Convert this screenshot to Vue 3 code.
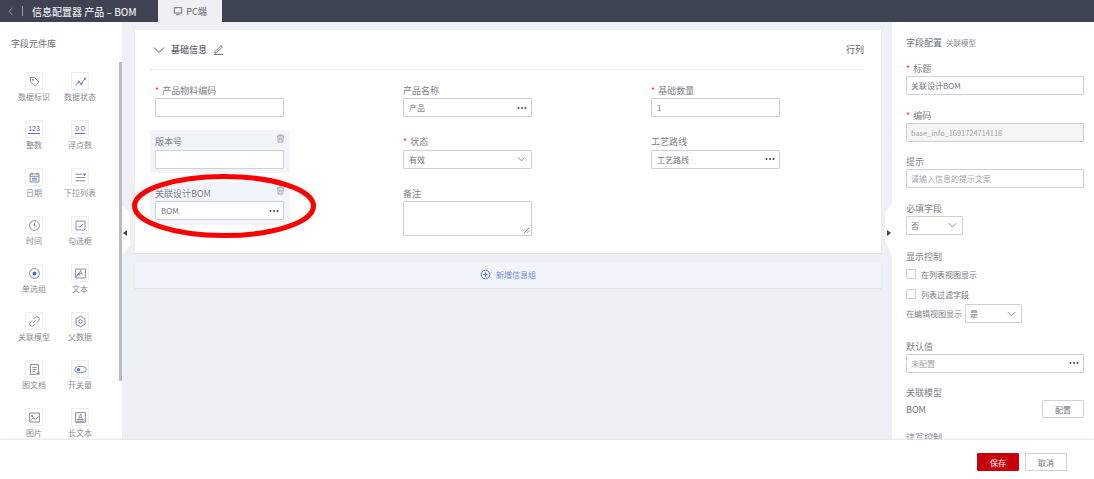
<script setup>
const tools = [
  { n: '数据标识', g: 'M3 3h5l5.5 5.5-5 5L3 8z', b: 'M5.5 5.5h1v1h-1z' },
  { n: '数据状态', g: 'M2 13l4-5 3 3 5-7', b: 'M4.8 8.5a1 1 0 1 0 2 0 1 1 0 1 0-2 0M8 11a1 1 0 1 0 2 0 1 1 0 1 0-2 0M12.5 4.5a1 1 0 1 0 2 0 1 1 0 1 0-2 0' },
  { n: '整数', t: '123' },
  { n: '浮点数', t: '0.0' },
  { n: '日期', g: 'M2.5 3.5h11v10h-11zM5 2v3M11 2v3M2.5 6.5h11', b: 'M5 9h6M5 11h6' },
  { n: '下拉列表', g: 'M2 4h8M2 8h12M2 12h12', b: 'M11 3h4l-2 3z', f: true },
  { n: '时间', g: 'M2 8a6 6 0 1 0 12 0 6 6 0 1 0-12 0M8 4.5V8l2.5 1.2' },
  { n: '勾选框', g: 'M2.5 2.5h11v11h-11z', b: 'M5 8l2.2 2.2L11 6' },
  { n: '单选组', g: 'M2 8a6 6 0 1 0 12 0 6 6 0 1 0-12 0', b: 'M5.5 8a2.5 2.5 0 1 0 5 0 2.5 2.5 0 1 0-5 0', f: true },
  { n: '文本', g: 'M2 2.5h12v11H2z', l: 'A', b: 'M3 12l2.5-4 2 2.5' },
  { n: '关联模型', g: 'M6.5 9.5l3-3M7 5l2-2a2.8 2.8 0 0 1 4 4l-2 2M9 11l-2 2a2.8 2.8 0 0 1-4-4l2-2' },
  { n: '父数据', g: 'M8 1.5l5.5 3.2v6.6L8 14.5l-5.5-3.2V4.7z', b: 'M5.8 8a2.2 2.2 0 1 0 4.4 0 2.2 2.2 0 1 0-4.4 0' },
  { n: '图文档', g: 'M3 2h10v9l-3 3H3zM5.5 5.5h5M5.5 8h5M5.5 10.5h3', b: 'M10.5 14l3.5-3.5v3.5z', f: true },
  { n: '开关量', g: 'M4.5 4.5h7a3.5 3.5 0 0 1 0 7h-7a3.5 3.5 0 0 1 0-7z', b: 'M3.5 8a2 2 0 1 0 4 0 2 2 0 1 0-4 0', f: true },
  { n: '图片', g: 'M2 2.5h12v11H2zM3 12l3.5-3.5 2.5 2 4-4', b: 'M4 5h2v2H4z', f: true },
  { n: '长文本', g: 'M2 2h12v12H2zM3.5 10.5h9M3.5 12.5h9', l: 'A' }
]
const fields = [
  { label: '产品物料编码', req: true },
  { label: '产品名称', value: '产品', kind: 'more' },
  { label: '基础数量', req: true, value: '1' },
  { label: '版本号', active: true },
  { label: '状态', req: true, value: '有效', kind: 'select' },
  { label: '工艺路线', value: '工艺路线', kind: 'more' },
  { label: '关联设计BOM', value: 'BOM', kind: 'more', active: true },
  { label: '备注', kind: 'area' }
]
</script>

<template>
  <div class="page">
    <header class="topbar">
      <svg class="back" viewBox="0 0 8 12"><path d="M6 1L1.5 6 6 11" /></svg>
      <i class="sep"></i>
      <strong class="crumb">信息配置器 产品 – BOM</strong>
      <div class="tab">
        <svg viewBox="0 0 12 12"><path d="M1.5 2h9v6.5h-9zM4 10.5h4" /></svg>
        <span>PC端</span>
      </div>
    </header>

    <div class="main">
      <aside class="lib">
        <h3>字段元件库</h3>
        <div class="tools">
          <div v-for="x in tools" :key="x.n" class="tool">
            <div class="tile">
              <span v-if="x.t" class="num">{{ x.t }}</span>
              <svg v-else viewBox="0 0 16 16">
                <path v-if="x.g" :d="x.g" class="ig" />
                <path v-if="x.b" :d="x.b" :class="x.f ? 'ibf' : 'ib'" />
                <text v-if="x.l" x="8" y="9.5" text-anchor="middle" class="il">{{ x.l }}</text>
              </svg>
            </div>
            <span class="tname">{{ x.n }}</span>
          </div>
        </div>
        <i class="scroll"></i>
      </aside>

      <section class="canvas">
        <div class="card">
          <div class="cardhead">
            <svg class="chev" viewBox="0 0 12 8"><path d="M1 1.5l5 5 5-5" /></svg>
            <span class="ctitle">基础信息</span>
            <svg class="pen" viewBox="0 0 12 12"><path d="M2 8.5L8.5 2l1.5 1.5L3.5 10H2zM1 11.5h10" /></svg>
            <span class="rc">行列</span>
          </div>
          <div class="grid">
            <div v-for="f in fields" :key="f.label" class="cell" :class="{ active: f.active }">
              <label class="flabel"><em v-if="f.req">*</em>{{ f.label }}</label>
              <div class="box" :class="{ area: f.kind === 'area' }">
                <span>{{ f.value }}</span>
                <i v-if="f.kind === 'more'" class="dots"></i>
                <svg v-if="f.kind === 'select'" class="caret" viewBox="0 0 10 6"><path d="M1 1l4 4 4-4" /></svg>
                <svg v-if="f.kind === 'area'" class="grip" viewBox="0 0 8 8"><path d="M1 7l6-6M4 7l3-3" /></svg>
              </div>
              <svg v-if="f.active" class="trash" viewBox="0 0 10 10"><path d="M1 2.2h8M3.5 2V1h3v1M2 2.5l.5 6.5h5l.5-6.5M4.2 4v3.5M5.8 4v3.5" /></svg>
            </div>
          </div>
        </div>
        <div class="addbar">
          <svg viewBox="0 0 12 12"><circle cx="6" cy="6" r="4.7" /><path d="M6 3.5v5M3.5 6h5" /></svg>
          <span>新增信息组</span>
        </div>
      </section>

      <aside class="conf">
        <div class="chead"><b>字段配置</b><small>关联模型</small></div>
        <div class="cfield"><label><em>*</em>标题</label><div class="box wide"><span>关联设计BOM</span></div></div>
        <div class="cfield"><label><em>*</em>编码</label><div class="box wide off"><span class="code">base_info_1691724714118</span></div></div>
        <div class="cfield"><label>提示</label><div class="box wide hint"><span>请输入信息的提示文案</span></div></div>
        <div class="cfield"><label>必填字段</label>
          <div class="box short"><span>否</span><svg class="caret" viewBox="0 0 10 6"><path d="M1 1l4 4 4-4" /></svg></div>
        </div>
        <div class="cfield show">
          <label>显示控制</label>
          <div class="check"><i></i><span>在列表视图显示</span></div>
          <div class="check"><i></i><span>列表过滤字段</span></div>
          <div class="inline"><span>在编辑视图显示</span>
            <div class="box short"><span>是</span><svg class="caret" viewBox="0 0 10 6"><path d="M1 1l4 4 4-4" /></svg></div>
          </div>
        </div>
        <div class="cfield"><label>默认值</label><div class="box wide hint"><span>未配置</span><i class="dots"></i></div></div>
        <div class="cfield">
          <label>关联模型</label>
          <div class="modelrow"><span>BOM</span><button type="button">配置</button></div>
        </div>
        <div class="cfield rw"><label>读写控制</label></div>
      </aside>

      <div class="handle hl"><i></i></div>
      <div class="handle hr"><i></i></div>
    </div>

    <footer class="foot">
      <button type="button" class="save">保存</button>
      <button type="button" class="cancel">取消</button>
    </footer>

    <svg class="mark" viewBox="0 0 190 70"><ellipse cx="94" cy="35" rx="89.5" ry="29.5" /></svg>
  </div>
</template>

<style>
html, body { margin: 0; background: #fff; }
</style>

<style scoped>
.page {
  position: relative;
  width: 1094px;
  height: 479px;
  overflow: hidden;
  display: flex;
  flex-direction: column;
  font-family: "Noto Sans CJK SC", "Noto Sans", sans-serif;
  color: #71757d;
  font-size: 8px;
}
svg { display: block; fill: none; }
em { font-style: normal; color: #e8453c; margin-right: 3px; }

.topbar {
  height: 22px;
  flex: none;
  background: #3e4351;
  display: flex;
  align-items: center;
  color: #e6e8ec;
}
.back { width: 6px; height: 9px; margin-left: 8px; }
.back path { stroke: #aeb2bb; stroke-width: 1; }
.sep { width: 1px; height: 10px; background: #9a9ea8; margin-left: 8px; }
.crumb { font-size: 10px; font-weight: 500; margin-left: 9px; width: 126px; white-space: nowrap; }
.tab {
  width: 64px;
  height: 22px;
  background: #eef0f5;
  display: flex;
  align-items: center;
  justify-content: center;
  gap: 3px;
  color: #5f6570;
  font-size: 9px;
}
.tab svg { width: 10px; height: 10px; }
.tab path { stroke: #4d5565; stroke-width: 1; }

.main { position: relative; flex: none; height: 418px; display: flex; background: #eff0f5; }

.lib { position: relative; width: 122px; flex: none; background: #fff; overflow: hidden; }
.lib h3 { margin: 15px 0 0 11px; font-size: 9px; line-height: 13px; font-weight: 400; color: #6a6e76; }
.tools {
  display: grid;
  grid-template-columns: 46px 46px;
  grid-auto-rows: 48px;
  margin: 22px 0 0 11px;
}
.tool { display: flex; flex-direction: column; align-items: center; }
.tile {
  width: 18px;
  height: 18px;
  box-sizing: border-box;
  border: 1px solid #eceef2;
  border-radius: 2px;
  display: flex;
  align-items: center;
  justify-content: center;
}
.tile svg { width: 13px; height: 13px; }
.ig { stroke: #6a7285; stroke-width: 1; }
.ib { stroke: #4a70e0; stroke-width: 1.1; }
.ibf { fill: #4a70e0; }
.il { fill: #6a7285; font-size: 8px; font-family: "Liberation Sans", sans-serif; }
.num {
  font-family: "Liberation Sans", sans-serif;
  font-size: 7px;
  line-height: 9px;
  color: #5d6679;
  border-bottom: 1px solid #4a70e0;
}
.tname { margin-top: 1px; line-height: 12px; color: #898d94; white-space: nowrap; }
.scroll { position: absolute; left: 119px; top: 40px; width: 3px; height: 319px; background: #b9bbc0; }

.canvas { flex: 1; padding: 8px 11px 0 13px; min-width: 0; }
.card { background: #fff; height: 223px; box-sizing: border-box; padding: 0 17px 0 15px; box-shadow: 0 1px 1px #e2e3e8; }
.cardhead {
  height: 40px;
  box-sizing: border-box;
  border-bottom: 1px dotted #e2e4e9;
  display: flex;
  align-items: center;
  padding-left: 3px;
}
.chev { width: 12px; height: 8px; }
.chev path { stroke: #555a64; stroke-width: 1; }
.ctitle { font-size: 9px; font-weight: 500; color: #5e626b; margin-left: 6px; }
.pen { width: 11px; height: 11px; margin-left: 6px; }
.pen path { stroke: #555a64; stroke-width: .9; }
.rc { margin-left: auto; font-size: 9px; color: #5e626b; }
.grid {
  display: grid;
  grid-template-columns: repeat(3, 140px);
  column-gap: 108px;
  row-gap: 8.5px;
  padding-top: 8.5px;
}
.cell { position: relative; padding: 5px 6px 4px 5px; height: 43px; box-sizing: border-box; }
.cell.active { background: #f1f4fb; }
.flabel { display: block; font-size: 9px; line-height: 13px; margin-bottom: 1.5px; color: #7d8188; white-space: nowrap; }
.box {
  height: 19px;
  box-sizing: border-box;
  background: #fff;
  border: 1px solid #cfd1d6;
  border-radius: 1px;
  display: flex;
  align-items: center;
  justify-content: space-between;
  padding: 0 5px;
  color: #71757d;
  white-space: nowrap;
}
.box.area { height: 35px; position: relative; }
.dots {
  width: 2px;
  height: 2px;
  margin-right: 3px;
  border-radius: 50%;
  background: #40444e;
  box-shadow: 3.5px 0 #40444e, -3.5px 0 #40444e;
}
.caret { width: 9px; height: 6px; }
.caret path { stroke: #71757d; stroke-width: .9; }
.grip { position: absolute; right: 1px; bottom: 1px; width: 7px; height: 7px; }
.grip path { stroke: #555; stroke-width: .8; }
.trash { position: absolute; right: 5px; top: 4px; width: 9px; height: 9px; }
.trash path { stroke: #666a73; stroke-width: .6; }
.addbar {
  margin-top: 9px;
  height: 26px;
  box-sizing: border-box;
  padding-bottom: 1px;
  background: #f1f4fb;
  display: flex;
  align-items: center;
  justify-content: center;
  gap: 5px;
  color: #6f8bdc;
  box-shadow: 0 1px 1px #e2e3e8;
}
.addbar svg { width: 11px; height: 11px; }
.addbar circle, .addbar path { stroke: #4a6fdc; stroke-width: 1; }

.conf { width: 202px; flex: none; background: #fff; box-sizing: border-box; padding: 14px 10px 0 14px; overflow: hidden; display: flex; flex-direction: column; gap: 13.5px; }
.chead { height: 14px; line-height: 14px; display: flex; align-items: center; gap: 4px; margin-bottom: -1.5px; }
.chead b { font-size: 9px; font-weight: 400; color: #6a6e76; }
.chead small { font-size: 7.5px; color: #8b8f96; }
.cfield { flex: none; }
.cfield label { display: block; font-size: 9px; line-height: 13px; margin-bottom: 1px; color: #7d8188; }
.conf .box { padding: 0 5px 0 4px; }
.wide { width: 178px; }
.off { background: #f5f5f5; color: #a2a5ab; }
.code { font-size: 7.4px; }
.hint { color: #a2a5ab; }
.short { width: 57px; }
.show { margin-top: 2px; margin-bottom: 3px; }
.show label { margin-bottom: 0; }
.show .check { display: flex; align-items: center; gap: 5px; height: 10px; margin: 6px 0 10px; color: #71757d; }
.check i { width: 10px; height: 10px; box-sizing: border-box; border: 1px solid #cfd1d6; border-radius: 1px; }
.inline { display: flex; align-items: center; gap: 3px; margin-top: -5px; color: #7d8188; }
.rw { margin-top: -.5px; }
.modelrow { display: flex; align-items: center; justify-content: space-between; height: 18px; color: #71757d; font-size: 9px; }
.modelrow button {
  width: 42px;
  height: 18px;
  padding: 0;
  background: #fff;
  border: 1px solid #cfd1d6;
  border-radius: 1px;
  font: inherit;
  font-size: 8px;
  color: #71757d;
}

.handle { position: absolute; background: #fff; }
.hl { left: 122px; top: 183px; width: 8px; height: 50px; clip-path: polygon(0 0, 100% 8px, 100% 40px, 0 100%); }
.hr { left: 885px; top: 181px; width: 7px; height: 54px; clip-path: polygon(100% 0, 0 9px, 0 37px, 100% 100%); }
.handle i { position: absolute; width: 0; height: 0; border: 3.5px solid transparent; }
.hl i { left: 1px; top: 24.5px; border-right: 4px solid #40444e; border-left: 0; }
.hr i { left: 2px; top: 26.5px; border-left: 4px solid #40444e; border-right: 0; }

.foot {
  flex: none;
  height: 39px;
  box-sizing: border-box;
  position: relative;
  background: #fff;
  box-shadow: 0 -1px 2px #e2e3e8;
  display: flex;
  align-items: flex-start;
  padding: 13px 27px 0 0;
  justify-content: flex-end;
  gap: 6px;
}
.foot button { width: 42px; height: 18px; padding: 0; font: inherit; font-size: 8px; border-radius: 1px; }
.save { background: #c7000b; border: 1px solid #c7000b; color: #fff; }
.cancel { background: #fff; border: 1px solid #cfd1d6; color: #71757d; }

.mark { position: absolute; left: 130px; top: 171px; width: 190px; height: 70px; pointer-events: none; }
.mark ellipse { stroke: #fb0000; stroke-width: 5; }
</style>
